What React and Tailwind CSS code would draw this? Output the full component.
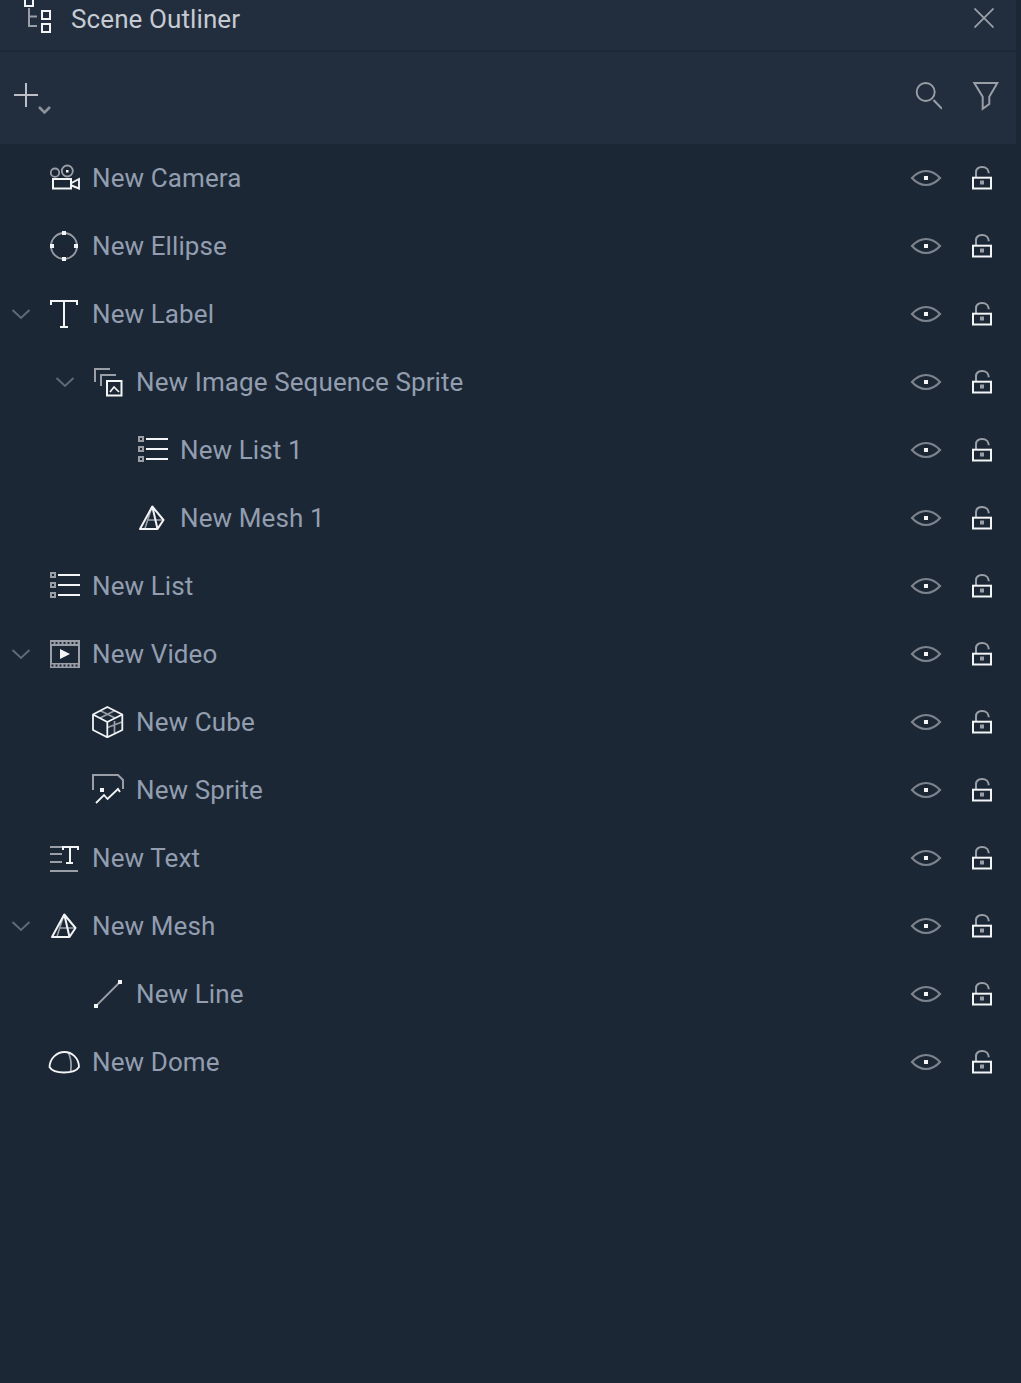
import React from 'react';

const WHITE = '#f2f4f6';
const GRAY = '#9a9fa7';

const Svg = ({ children, className = 'w-8 h-8' }) => (
  <svg viewBox="0 0 32 32" fill="none" className={`${className} shrink-0`}>
    {children}
  </svg>
);

const CameraIcon = () => (
  <Svg>
    <circle cx="7" cy="10.7" r="4.2" stroke={GRAY} strokeWidth="1.8" />
    <circle cx="19.3" cy="9" r="5.5" stroke={GRAY} strokeWidth="1.8" />
    <rect x="18" y="8" width="2.5" height="2.5" fill={WHITE} />
    <rect x="5" y="17" width="18" height="9.5" stroke={WHITE} strokeWidth="2" />
    <path d="M23.5 21 L31 17 V26.5 L23.5 23.5" stroke={WHITE} strokeWidth="1.9" />
  </Svg>
);

const EllipseIcon = () => (
  <Svg>
    <circle cx="16" cy="16" r="13" stroke={GRAY} strokeWidth="1.8" />
    <rect x="14" y="1" width="4" height="4" fill={WHITE} />
    <rect x="14" y="27" width="4" height="4" fill={WHITE} />
    <rect x="2" y="14" width="4" height="4" fill={WHITE} />
    <rect x="26" y="14" width="4" height="4" fill={WHITE} />
  </Svg>
);

const LabelIcon = () => (
  <Svg>
    <path d="M3 7 V3 H29 V7 M16 3 V28.5 M12 29 H20" stroke={WHITE} strokeWidth="2" />
  </Svg>
);

const SequenceIcon = () => (
  <Svg>
    <path d="M3 16 V3 H18" stroke={GRAY} strokeWidth="2" />
    <path d="M9 20 V9 H24" stroke={GRAY} strokeWidth="2" />
    <rect x="15" y="15" width="14.5" height="14.5" stroke={WHITE} strokeWidth="2" />
    <path d="M18 26 L22 21 L27 26" stroke={WHITE} strokeWidth="1.7" />
  </Svg>
);

const ListIcon = () => (
  <Svg>
    {[2, 12, 22].map((y) => (
      <rect key={y} x="3" y={y + 1} width="4" height="4" stroke={GRAY} strokeWidth="2" />
    ))}
    {[5, 15, 25].map((y) => (
      <path key={y} d={`M10 ${y} H32`} stroke={WHITE} strokeWidth="2" />
    ))}
  </Svg>
);

const MeshIcon = () => (
  <Svg>
    <path d="M12 18 L27.3 18 M16 4.5 L9 26.5" stroke={GRAY} strokeWidth="1.6" />
    <path d="M16.3 4.5 L4 27 H21.5 L27.5 18 Z M16.3 4.5 L21.5 27" stroke={WHITE} strokeWidth="2" strokeLinejoin="round" />
  </Svg>
);

const VideoIcon = () => (
  <Svg>
    <rect x="3" y="3" width="28" height="26" stroke={GRAY} strokeWidth="2" />
    <rect x="2" y="2" width="30" height="6" fill={GRAY} />
    <rect x="2" y="25" width="30" height="5" fill={GRAY} />
    <path d="M3.5 5 H31 M3.5 27.5 H31" stroke="#1c2735" strokeWidth="2" strokeDasharray="2 2" />
    <path d="M12 11 L22 16 L12 21 Z" fill={WHITE} />
  </Svg>
);

const CubeIcon = () => (
  <Svg>
    <path d="M8 4.5 L23 12 M23 4.5 L8 12 M22.5 15 V27 M15.5 21.5 L30 16" stroke={GRAY} strokeWidth="1.7" />
    <path d="M15.3 1 L30.3 8.5 V24 L15.3 31.3 L1 24 V8.5 Z M1 8.5 L15.3 16 L30.3 8.5 M15.3 16 V31.3" stroke={WHITE} strokeWidth="1.8" strokeLinejoin="round" />
  </Svg>
);

const SpriteIcon = () => (
  <Svg>
    <path d="M1 16 V1 H26 L31 6 V15" stroke={GRAY} strokeWidth="2" />
    <rect x="8" y="14" width="4" height="4" fill={WHITE} />
    <path d="M4 29 L12 21 L15.5 25 L26 15 L28 18" stroke={WHITE} strokeWidth="1.8" />
  </Svg>
);

const TextIcon = () => (
  <Svg>
    <path d="M2 5 H14 M2 12 H14 M2 20 H14" stroke={GRAY} strokeWidth="2" />
    <path d="M2 29 H30" stroke={GRAY} strokeWidth="2" />
    <path d="M15 8 V5 H30 V8 M22 5 V21 M18 21 H25" stroke={WHITE} strokeWidth="2" />
  </Svg>
);

const LineIcon = () => (
  <Svg>
    <path d="M4 28 L28 4" stroke={GRAY} strokeWidth="1.8" />
    <rect x="2" y="26" width="4" height="4" fill={WHITE} />
    <rect x="26" y="2" width="4" height="4" fill={WHITE} />
  </Svg>
);

const DomeIcon = () => (
  <Svg>
    <path d="M20.3 6.7 C23 12 23.5 20 22.7 25.7" stroke={GRAY} strokeWidth="1.8" />
    <path d="M1.5 21 C2 12 9 6 16.5 6 C24 6 30.8 12 31 21 C29 24.5 24 26.5 16 26.5 C9 26.5 3.5 24.5 1.5 21 Z" stroke={WHITE} strokeWidth="1.8" />
  </Svg>
);

const EyeIcon = () => (
  <Svg>
    <path d="M2 16 C7 10.5 12 9 16 9 C20 9 25 10.5 30 16 C25 21.5 20 23 16 23 C12 23 7 21.5 2 16 Z" stroke="#7d838c" strokeWidth="2.2" />
    <rect x="14" y="14" width="4" height="4" fill={WHITE} />
  </Svg>
);

const LockIcon = () => (
  <Svg>
    <path d="M10 15 V10.5 C10 6.5 12.5 5 16 5 C20 5 22.7 7.5 22.8 11.3" stroke={GRAY} strokeWidth="2" />
    <rect x="7" y="15.7" width="18" height="10.8" stroke={WHITE} strokeWidth="2" />
    <rect x="14" y="18.5" width="4" height="4" fill={GRAY} />
  </Svg>
);

const Chevron = () => (
  <svg viewBox="0 0 20 12" fill="none" className="w-5 h-3 shrink-0">
    <path d="M1.5 2 L10 10 L18.5 2" stroke="#5f6a78" strokeWidth="2" />
  </svg>
);

const rows = [
  { label: 'New Camera', depth: 0, icon: CameraIcon },
  { label: 'New Ellipse', depth: 0, icon: EllipseIcon },
  { label: 'New Label', depth: 0, icon: LabelIcon, open: true },
  { label: 'New Image Sequence Sprite', depth: 1, icon: SequenceIcon, open: true },
  { label: 'New List 1', depth: 2, icon: ListIcon },
  { label: 'New Mesh 1', depth: 2, icon: MeshIcon },
  { label: 'New List', depth: 0, icon: ListIcon },
  { label: 'New Video', depth: 0, icon: VideoIcon, open: true },
  { label: 'New Cube', depth: 1, icon: CubeIcon },
  { label: 'New Sprite', depth: 1, icon: SpriteIcon },
  { label: 'New Text', depth: 0, icon: TextIcon },
  { label: 'New Mesh', depth: 0, icon: MeshIcon, open: true },
  { label: 'New Line', depth: 1, icon: LineIcon },
  { label: 'New Dome', depth: 0, icon: DomeIcon },
];

const Row = ({ label, depth, icon: Icon, open }) => (
  <div className="flex items-center h-[68px] pr-[23px]">
    <div className="shrink-0" style={{ width: depth * 44 }} />
    <div className="w-[48px] shrink-0 pl-[11px] flex items-center">{open && <Chevron />}</div>
    <Icon />
    <span className="ml-[12px] text-[26px] tracking-[0.1px] text-[#929eb0] whitespace-nowrap">{label}</span>
    <div className="ml-auto flex items-center gap-6">
      <EyeIcon />
      <LockIcon />
    </div>
  </div>
);

export default function App() {
  return (
    <div className="h-[1383px] overflow-hidden bg-[#1c2735]" style={{ fontFamily: 'Roboto, sans-serif' }}>
      <div className="w-[1016px]">
        {/* Title bar */}
        <div className="h-[50px] bg-[#222d3d] flex items-center pl-[22px] pr-[22px]">
          <svg viewBox="0 0 32 36" fill="none" className="w-8 h-9 shrink-0 -mt-[14px]">
            <path d="M3 0 V6 H11 V0" stroke={WHITE} strokeWidth="2" />
            <path d="M7 8 V26 H15 M7 16.5 H15" stroke={GRAY} strokeWidth="2" />
            <rect x="20" y="11" width="8" height="8" stroke={WHITE} strokeWidth="2" />
            <rect x="20" y="24" width="8" height="8" stroke={WHITE} strokeWidth="2" />
          </svg>
          <span className="ml-[17px] -mt-[12px] text-[26px] tracking-[0.1px] text-[#c6cbd2] whitespace-nowrap">Scene Outliner</span>
          <svg viewBox="0 0 20 20" fill="none" className="w-5 h-5 ml-auto -mt-[14px]">
            <path d="M0.5 0.5 L19.5 19.5 M19.5 0.5 L0.5 19.5" stroke={GRAY} strokeWidth="1.8" />
          </svg>
        </div>
        <div className="h-[2px] bg-[#1d2836]" />
        {/* Toolbar */}
        <div className="h-[92px] bg-[#222d3d] flex items-center pl-[14px] pr-[14px] gap-7">
          <div className="flex items-end mr-auto">
            <svg viewBox="0 0 24 24" fill="none" className="w-6 h-6 shrink-0 mb-[6px]">
              <path d="M12 0 V24 M0 12 H24" stroke="#bcc0c6" strokeWidth="2" />
            </svg>
            <svg viewBox="0 0 13 8" fill="none" className="w-[13px] h-2 shrink-0 mb-[-1px]">
              <path d="M1 1 L6.5 6.5 L12 1" stroke="#8b929c" strokeWidth="2.6" />
            </svg>
          </div>
          <Svg>
            <circle cx="15.7" cy="10" r="9" stroke={GRAY} strokeWidth="1.9" />
            <path d="M23.5 18 L32 26.7" stroke={GRAY} strokeWidth="2" />
          </Svg>
          <Svg>
            <path d="M4.3 1 H27.3 L19.3 14.7 V22 L12.7 26.7 V14.7 Z" stroke={GRAY} strokeWidth="2" />
          </Svg>
        </div>
      </div>
      {/* Outliner tree */}
      {rows.map((row) => (
        <Row key={row.label} {...row} />
      ))}
    </div>
  );
}
